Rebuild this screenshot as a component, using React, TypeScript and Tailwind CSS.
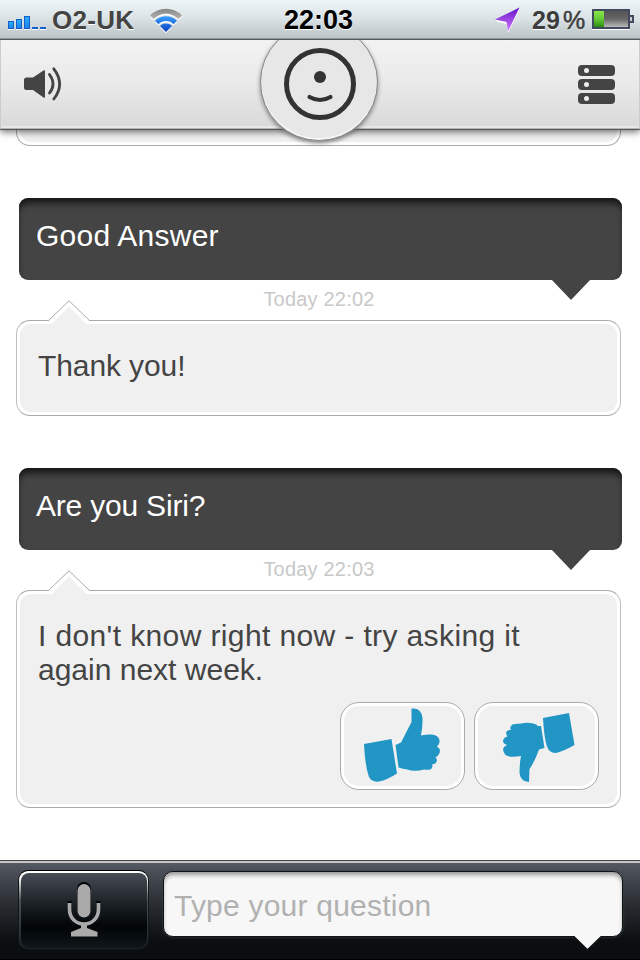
import type { ReactNode } from "react"

const SIGNAL_BARS = ["h-2", "h-2.5", "h-[13px]", "h-0.5", "h-0.5"]

function StatusBar() {
    return (
        <div className="relative z-20 flex h-10 shrink-0 items-center border-b border-[#4f5b60] bg-linear-to-b from-[#eef6f9] via-[#d9e1e4] to-[#b9c2c5] pl-2 pr-1.5 shadow-[inset_0_-1px_0_#8e999d]">
            <div className="flex h-[18px] w-[38px] items-end justify-between">
                {SIGNAL_BARS.map((height, i) => (
                    <span
                        key={i}
                        className={`${height} w-1.5 border border-[#1460c8] bg-linear-to-b from-[#2cb0ff] to-[#1c80e8] shadow-[0_1px_0_#fff]`}
                    />
                ))}
            </div>
            <span className="ml-[6px] w-[82px] whitespace-nowrap text-[26px] font-bold leading-10 tracking-[0.3px] text-[#444] [text-shadow:0_1px_0_#fff]">O2-UK</span>
            <svg className="ml-[15px] mt-0.5 h-[26px] w-[34px] shrink-0" viewBox="0 0 34 26" fill="none">
                <defs>
                    <linearGradient id="wifi" x1="0" y1="8" x2="0" y2="24" gradientUnits="userSpaceOnUse">
                        <stop stopColor="#3aa0ff" />
                        <stop offset="1" stopColor="#0a3fc0" />
                    </linearGradient>
                    <linearGradient id="wifi-off" x1="0" y1="0" x2="0" y2="1">
                        <stop stopColor="#858585" />
                        <stop offset="1" stopColor="#b4b4b4" />
                    </linearGradient>
                </defs>
                <g fill="#fff" transform="translate(0 1.3)">
                    <path d="M1 7.500A22.500 22.500 0 0 1 33 7.500L29.500 11A17.700 17.700 0 0 0 4.500 11Z" />
                    <path d="M6 12.700A15.600 15.600 0 0 1 28 12.700L24.500 16.200A10.600 10.600 0 0 0 9.500 16.200Z" />
                    <path d="M11 18A8.500 8.500 0 0 1 23 18L17 24Z" />
                </g>
                <path d="M1 7.500A22.500 22.500 0 0 1 33 7.500L29.500 11A17.700 17.700 0 0 0 4.500 11Z" fill="url(#wifi-off)" />
                <path d="M6 12.700A15.600 15.600 0 0 1 28 12.700L24.500 16.200A10.600 10.600 0 0 0 9.500 16.200Z" fill="url(#wifi)" />
                <path d="M11 18A8.500 8.500 0 0 1 23 18L17 24Z" fill="url(#wifi)" />
            </svg>
            <span className="ml-[101px] w-[72px] whitespace-nowrap text-[27px] font-bold leading-10 text-black [text-shadow:0_1px_0_#fff]">22:03</span>
            <svg className="ml-[138px] h-7 w-7 shrink-0" viewBox="0 0 28 28">
                <defs>
                    <linearGradient id="arrow" x1="0" y1="0" x2="0" y2="1">
                        <stop stopColor="#6212c8" />
                        <stop offset="1" stopColor="#d77cff" />
                    </linearGradient>
                </defs>
                <path d="M1 15 26 3 14 27 12.500 18Z" fill="#fff" />
                <path d="M1 13.500 25.500 1.500 14 25.500 12.500 16Z" fill="url(#arrow)" />
            </svg>
            <span className="ml-[10px] w-[29px] text-[25px] font-bold leading-10 text-[#3c3c3c] [text-shadow:0_1px_0_#fff]">29</span>
            <span className="ml-[2px] w-[24px] text-[25px] leading-10 text-[#3c3c3c] [-webkit-text-stroke:0.5px_#3c3c3c] [text-shadow:0_1px_0_#fff]">%</span>
            <div className="-mt-px ml-[5px] flex items-center">
                <div className="flex h-5 w-[38px] border-2 border-[#424a60] bg-linear-to-b from-[#555] via-[#666] to-[#bbb] shadow-[0_1px_0_#fff]">
                    <div className="w-[10px] bg-linear-to-b from-[#8be84a] via-[#65c936] to-[#278f0c]" />
                </div>
                <div className="h-2 w-1 border-2 border-l-0 border-[#424a60] bg-[#ccc]" />
            </div>
        </div>
    )
}

function Header() {
    return (
        <header className="relative z-10 flex h-[90px] shrink-0 items-center justify-between border-b border-[#585858] bg-linear-to-b from-[#f3f3f3] via-[#e9e9e9] via-50% to-[#d9d9d9] pb-px pl-6 pr-[25px] shadow-[0_2px_7px_rgba(0,0,0,.55),inset_1px_0_0_#ccc,inset_-1px_0_0_#ccc,inset_0_-1px_0_#b5b5b5,inset_0_-3px_0_#e8e8e8]">
            <svg className="h-[34px] w-10" viewBox="0 0 40 34" fill="none">
                <path d="M2.500 10.500H9L19.500 3.500Q21 2.500 21 4.500V29.500Q21 31.500 19.500 30.500L9 23H2.500Q0 23 0 20.500V13Q0 10.500 2.500 10.500Z" fill="#444" />
                <path d="M25.500 7.500Q32.500 17 25.500 26M29.800 1.800Q41.500 17 29.800 32" stroke="#444" strokeWidth="2.800" strokeLinecap="round" />
            </svg>
            <div className="absolute left-[260px] top-[-17px] flex h-[118px] w-[118px] items-center justify-center rounded-full border border-[#888] bg-[#e7e7e7] shadow-[0_2px_4px_rgba(0,0,0,.5),inset_0_-2px_0_#f6f6f6,0_0_4px_#fff]">
                <svg className="mt-[3px] ml-px h-[72px] w-[72px]" viewBox="0 0 72 72" fill="none">
                    <circle cx="36" cy="36" r="33.500" stroke="#333" strokeWidth="5" />
                    <circle cx="36" cy="29" r="6" fill="#333" />
                    <path d="M25.500 49Q36 55 46.500 49" stroke="#333" strokeWidth="4.200" strokeLinecap="round" />
                </svg>
            </div>
            <div className="flex flex-col gap-[3px]">
                {[0, 1, 2].map((row) => (
                    <div key={row} className="flex h-[11px] w-[37px] items-center rounded-[4px] bg-[#444] pl-1.5">
                        <span className="h-[5px] w-[5px] rounded-full bg-[#eee]" />
                    </div>
                ))}
            </div>
        </header>
    )
}

function Question({ children }: { children: ReactNode }) {
    return (
        <div className="relative ml-[18.5px] h-[82px] w-[603px] rounded-[9px] bg-[#444] pl-[17.5px] pt-[21px] text-[30px] leading-[34px] text-white shadow-[inset_0_7px_7px_-2px_#151515]">
            {children}
            <svg className="absolute left-[532px] top-[81px] h-[21px] w-10" viewBox="0 0 40 21">
                <path d="M0 0H40L20 21Z" fill="#444" />
            </svg>
        </div>
    )
}

function Answer({ className, children }: { className: string; children: ReactNode }) {
    return (
        <div className={`relative ml-4 w-[605px] rounded-[14px] border border-x-[#c0c0c0] border-y-[#aaa] bg-white p-[3px] ${className}`}>
            <div className="h-full rounded-[11px] bg-[#f0f0f0] pl-[18px] text-[30px] leading-[34px] text-[#444]">
                {children}
            </div>
            <svg className="absolute left-[30px] top-[-21px] h-[26px] w-[44px]" viewBox="0 0 44 26">
                <path d="M0 21.500 2 20.500 22 .8 42 20.500 44 21.500V25H0Z" fill="#fff" />
                <path d="M.5 20.500H1.500L22 .8 42.500 20.500H44" fill="none" stroke="#aaa" />
                <path d="M3 26 22 6.500 41 26Z" fill="#f0f0f0" />
                <path d="M0 24H6V26H0ZM38 24H44V26H38Z" fill="#f0f0f0" />
            </svg>
        </div>
    )
}

function Timestamp({ children }: { children: ReactNode }) {
    return <div className="h-[40px] pr-[2px] pt-[7px] text-center text-xl leading-6 tracking-[0.2px] text-[#c8c8c8]">{children}</div>
}

function VoteButton({ children }: { children: ReactNode }) {
    return (
        <button className="h-[88px] w-[125px] rounded-[19px] border border-[#aaa] bg-white p-[3px]">
            <span className="flex h-full items-center justify-center rounded-[15px] bg-[#f0f0f0]">{children}</span>
        </button>
    )
}

function ThumbUp() {
    return (
        <svg className="-mt-0.5 h-[74px] w-[77px] shrink-0" viewBox="0 0 77 74" fill="#2196c4">
            <path d="M0 36 27.500 31 33 65.500Q23 72 15 73.500 8 74.500 5 69 1 58 0 36Z" />
            <path d="M31.500 37 37 34.500 47.500 14V.5Q57.500-.5 58.500 10 58.800 18 57 27.500 63 26 68 26.500 75 27.500 75.500 32.500 76 36 73 38.500 77 41 75.500 45 74.500 48 71.500 49 73.500 51 72.500 54 71.500 56 68 56.500 69.500 59 66.500 61.500 63 62 60 61.500 51 64 43 61.500 39 61 34.500 59.500Z" />
        </svg>
    )
}

function ThumbDown() {
    return (
        <svg className="ml-[5px] mt-0.5 h-[70px] w-[72px] shrink-0" viewBox="0 0 72 70" fill="#2196c4">
            <path d="M40 6 66 1 71.500 33Q61 39 53 41 46 41.500 43.500 33Q41 24 40 6Z" />
            <path d="M38 14 41.500 36 36 37.500Q32 49 26.500 57L26 70Q17.500 69.500 16.500 61 16.500 52 18 44 7 46 2.500 43 0 40 0 37 .5 34.500 4 33-1 31 .3 28 1 25 4.500 24.500 2.500 22 3.500 19.500 5 17.500 8 18 6 15 9.500 12.500 13 11.500 17 11.800 26 9.500 33.500 12.500L34.500 14Z" />
        </svg>
    )
}

function Composer() {
    return (
        <footer className="flex h-[100px] shrink-0 border-t border-[#444] bg-linear-to-b from-[#565b64] via-[#2b2f34] via-42% to-[#0a0e10] to-82% shadow-[inset_0_2px_0_#c6c6c6,inset_0_-1px_0_#000]">
            <button className="ml-[18px] mt-[9px] h-20 w-[131px] rounded-[10px] border border-x-[#15181b] border-b-[#101416] border-t-black bg-linear-to-b from-white from-8% via-[#4b5157] via-38% to-[#1c2327] px-[1.5px] pb-px pt-[2px]">
                <span className="flex h-full justify-center rounded-[8px] bg-linear-to-b from-[#484d56] via-[#030607] via-72% to-[#10171a] pt-[9px]">
                    <svg className="h-[56px] w-9" viewBox="0 0 36 56" fill="none">
                        <rect x="11" y="0" width="14" height="34" rx="7" fill="#000" />
                        <rect x="11.500" y="2" width="13" height="33.500" rx="6.500" fill="#aaa" />
                        <path d="M3.500 21V27C3.500 47 32.500 47 32.500 27V21" stroke="#aaa" strokeWidth="3.600" />
                        <path d="M1.500 20H5.500M30.500 20H34.500" stroke="#000" strokeWidth="2" />
                        <path d="M15 42H21V46L31.500 50V54.500H5V50L15 46Z" fill="#aaa" />
                    </svg>
                </span>
            </button>
            <div className="relative ml-[13.5px] mt-[10px] h-[66px] w-[460px] rounded-[10px] border-[1.5px] border-[#101314] bg-[#f7f7f7] pl-[10.5px] pt-[17px] text-[30px] leading-[34px] tracking-[0.22px] text-[#b1b1b1] shadow-[inset_0_4px_4px_-1px_#999,0_0_3px_#3a4348]">
                Type your question
                <svg className="absolute left-[407.5px] top-[62px] h-[18px] w-[34px]" viewBox="0 0 34 18">
                    <path d="M3 0H31V2L16.500 15.500 3 2Z" fill="#f7f7f7" />
                    <path d="M0 2.500H3L16.500 15.800 30 2.500H33" fill="none" stroke="#101314" strokeWidth="1.200" />
                </svg>
            </div>
        </footer>
    )
}

export default function App() {
    return (
        <div className="flex h-[960px] w-[640px] flex-col overflow-hidden bg-white font-['Liberation_Sans',Arial,sans-serif]">
            <StatusBar />
            <Header />
            <main className="h-[730px] shrink-0 overflow-hidden">
                {/* tail end of the previous answer */}
                <div className="ml-4 h-4 w-[605px] rounded-b-[14px] border border-t-0 border-[#aaa] bg-white px-[3px] pb-[3px]">
                    <div className="h-full rounded-b-[11px] bg-[#f0f0f0]" />
                </div>

                <div className="mt-[52px]">
                    <Question><span className="tracking-[0.25px]">Good Answer</span></Question>
                    <Timestamp>Today 22:02</Timestamp>
                    <Answer className="h-24">
                        <p className="pt-[25px] tracking-[-0.1px]">Thank you!</p>
                    </Answer>
                </div>

                <div className="mt-[52px]">
                    <Question><span className="tracking-[-0.2px]">Are you Siri?</span></Question>
                    <Timestamp>Today 22:03</Timestamp>
                    <Answer className="h-[218px]">
                        <p className="w-[540px] pt-[25px]">
                            <span className="tracking-[0.38px]">I don't know right now - try asking it</span>
                            <br />
                            again next week.
                        </p>
                        <div className="mt-[15px] flex justify-end gap-[9px] pr-[18px]">
                            <VoteButton><ThumbUp /></VoteButton>
                            <VoteButton><ThumbDown /></VoteButton>
                        </div>
                    </Answer>
                </div>
            </main>
            <Composer />
        </div>
    )
}
